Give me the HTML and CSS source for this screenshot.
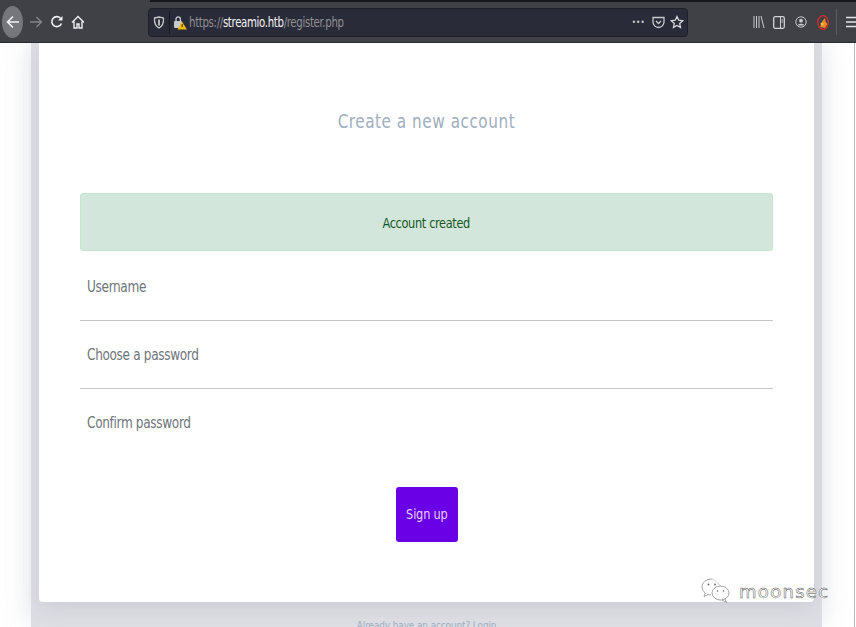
FILE: index.html
```html
<!DOCTYPE html>
<html lang="en">
<head>
<meta charset="utf-8">
<title>Create a new account</title>
<link rel="stylesheet" href="styles.css">
</head>
<body>
<div class="tabstrip"><div class="tabstrip-dark"></div></div>
<header class="toolbar">
  <div class="nav">
    <span class="back"><svg width="16" height="16" viewBox="0 0 16 16"><path d="M14 8H2.500M8 2.500 2.500 8 8 13.500" fill="none" stroke="#f4f4f6" stroke-width="1.600"/></svg></span>
    <svg class="fwd" width="14" height="14" viewBox="0 0 14 14"><path d="M1 7h11.500M7.500 2l5 5-5 5" fill="none" stroke="#85878c" stroke-width="1.300"/></svg>
    <svg class="reload" width="14" height="14" viewBox="0 0 14 14"><path d="M11.500 8.500A5 5 0 1 1 10.500 3.200" fill="none" stroke="#f0f0f3" stroke-width="1.600"/><path d="M12.500 1v4.600H8z" fill="#f0f0f3"/></svg>
    <svg class="home" width="14" height="14" viewBox="0 0 14 14"><path d="M1 7.500 7 1.500l6 6M3 6.500V13h3V9h2v4h3V6.500" fill="none" stroke="#f0f0f3" stroke-width="1.400"/></svg>
  </div>
  <div class="urlbar">
    <svg class="shield" width="12" height="13" viewBox="0 0 12 13"><path d="M1.500 2 6 1l4.500 1c.3 4.500-.8 8-4.500 10C2.300 10 1.200 6.500 1.500 2z" fill="none" stroke="#c4c5c9" stroke-width="1.300"/><path d="M6 3.500v6" stroke="#c4c5c9" stroke-width="1.800"/></svg>
    <span class="divider"></span>
    <svg class="lock" width="14" height="15" viewBox="0 0 14 15"><rect x="1" y="6" width="8" height="7" rx="1" fill="#c9cace"/><path d="M3 6V4a2.200 2.200 0 0 1 4.400 0v2" fill="none" stroke="#c9cace" stroke-width="1.300"/><path d="M9 6.500 14 14.500H4.500z" fill="#f5b800"/><path d="M9.200 9v3" stroke="#33261a" stroke-width="1"/></svg>
    <span class="url"><span class="sq sq-left"><span class="url-dim">https://</span><span class="url-host">streamio.htb</span><span class="url-dim">/register.php</span></span></span>
    <span class="dots">•••</span>
    <svg class="pocket" width="13" height="13" viewBox="0 0 13 13"><path d="M1 1.500h11V6a5.500 5.500 0 0 1-11 0z" fill="none" stroke="#c9cace" stroke-width="1.300"/><path d="m4 5 2.500 2.500L9 5" fill="none" stroke="#c9cace" stroke-width="1.300"/></svg>
    <svg class="star" width="14" height="14" viewBox="0 0 14 14"><path d="m7 1.500 1.700 3.700 4 .5-3 2.700.8 4L7 10.500l-3.500 1.900.8-4-3-2.700 4-.5z" fill="none" stroke="#d6d7da" stroke-width="1.300"/></svg>
  </div>
  <div class="tools">
    <svg class="t-lib" width="12" height="14" viewBox="0 0 12 14"><path d="M1 1v12M3.500 1v12M6 1v12M8 1l3 12" fill="none" stroke="#c9cace" stroke-width="1"/></svg>
    <svg class="t-side" width="12" height="13" viewBox="0 0 12 13"><rect x=".7" y=".7" width="10.600" height="11.600" rx="1.500" fill="none" stroke="#d2d3d6" stroke-width="1.300"/><path d="M7.500 1v11M8.500 4H10M8.500 6H10" stroke="#d2d3d6" fill="none"/></svg>
    <svg class="t-acct" width="12" height="12" viewBox="0 0 12 12"><circle cx="6" cy="6" r="5.200" fill="none" stroke="#c9cace" stroke-width="1"/><circle cx="6" cy="4.700" r="1.900" fill="#c9cace"/><path d="M2.500 9.500c1-2.200 6-2.200 7 0" fill="#c9cace"/></svg>
    <svg class="t-ext" width="12" height="15" viewBox="0 0 12 15"><ellipse cx="6" cy="7.500" rx="5.300" ry="6.800" fill="#3f4147" stroke="#d92b2b" stroke-width="1.300"/><path d="M3 12 5.500 6 8 3l.5 3.500L10.500 9 8 13z" fill="#ef8a1e"/><circle cx="5" cy="9" r="1.500" fill="#f6c04a"/></svg>
    <span class="sep"></span>
    <svg class="menu" width="12" height="12" viewBox="0 0 12 12"><path d="M0 1.500h12M0 6h12M0 10.500h12" stroke="#e4e4e7" stroke-width="1.500"/></svg>
  </div>
</header>
<main class="page">
  <div class="band">
    <section class="card">
      <h1 class="title"><span class="sq sq-title">Create a new account</span></h1>
      <div class="alert"><span class="sq">Account created</span></div>
      <form class="form">
        <div class="field"><span class="sq sq-left">Username</span></div>
        <div class="field"><span class="sq sq-left">Choose a password</span></div>
        <div class="field field-last"><span class="sq sq-left">Confirm password</span></div>
        <div class="actions"><button type="button" class="btn"><span class="sq">Sign up</span></button></div>
      </form>
    </section>
    <p class="foot"><span class="sq sq-foot">Already have an account? Login</span></p>
  </div>
  <div class="mark">
    <svg width="32" height="26" viewBox="0 0 32 26"><path d="M12 1C6 1 2 4.500 2 9c0 2.500 1.300 4.500 3.300 6L4 18.500 8 16.500c1 .3 2 .4 3 .4" fill="none" stroke="#8d8d8d" stroke-width=".8"/><path d="M21 8.500C18 5 15 2 12 1" fill="none" stroke="#c4c4c4" stroke-width=".8"/><circle cx="8.500" cy="6.500" r=".9" fill="#666"/><circle cx="15" cy="6.500" r=".9" fill="#666"/><ellipse cx="20.500" cy="15" rx="8.500" ry="7" fill="none" stroke="#8d8d8d" stroke-width=".8"/><path d="m25 21 1.500 3.500-4.500-2.500" fill="none" stroke="#8d8d8d" stroke-width=".8"/><circle cx="17.500" cy="13" r=".8" fill="#666"/><circle cx="23.500" cy="13" r=".8" fill="#666"/></svg>
    <span class="mark-text">moonsec</span>
  </div>
</main>
</body>
</html>
```
FILE: styles.css
```css
* { box-sizing: border-box; }
html, body { margin: 0; height: 627px; overflow: hidden; }
body {
  display: flex;
  flex-direction: column;
  background: #fff;
  font-family: "DejaVu Sans", "Noto Sans", sans-serif;
  font-stretch: condensed;
}
.sq { display: inline-block; white-space: nowrap; transform: scaleX(.87); }
.sq-left { transform-origin: left center; }
.sq-title { transform: scaleX(.85); }
.sq-foot { transform: scaleX(.9); }
.url .sq-left { transform: scaleX(.84); }
.tabstrip { height: 2px; background: #3f4147; flex: none; padding-left: 150px; position: relative; z-index: 2; }
.tabstrip-dark { height: 2px; background: #16171c; }
.toolbar {
  flex: none;
  height: 41px;
  background: #3f4147;
  border-bottom: 1px solid #2a2b30;
  display: flex;
  align-items: center;
  position: relative;
  z-index: 2;
}
.nav { display: flex; align-items: center; width: 148px; padding-left: 2px; flex: none; }
.back {
  width: 21px; height: 32px; border-radius: 50%;
  background: #75777c;
  display: flex; align-items: center; justify-content: center;
  flex: none;
}
.fwd { margin-left: 6px; }
.reload { margin-left: 7px; }
.home { margin-left: 7px; }
.urlbar {
  width: 540px; height: 29px; flex: none;
  background: #2a2b38;
  border: 1px solid #1f2027;
  border-radius: 4px;
  display: flex; align-items: center;
  padding: 0 3px 0 4px;
}
.divider { width: 1px; height: 23px; background: #17181d; margin-left: 4px; }
.lock { margin-left: 3px; }
.url {
  margin-left: 2px; font-size: 13.500px; white-space: nowrap;
  letter-spacing: -.4px;
  flex: 1;
}
.url-dim { color: #8f8f95; }
.url-host { color: #f4f4f6; }
.dots { color: #c9cace; font-size: 8px; letter-spacing: .2px; }
.pocket { margin-left: 7px; }
.star { margin-left: 5px; }
.tools { display: flex; align-items: center; flex: 1; padding-left: 65px; }
.t-side { margin-left: 8px; }
.t-acct { margin-left: 10px; }
.t-ext { margin-left: 10px; }
.sep { width: 1px; height: 26px; background: #5b5d63; margin-left: 7px; }
.menu { margin-left: 9px; flex: none; }
.page {
  flex: 1;
  min-height: 0;
  position: relative;
  background: #fff;
  padding: 0 34px 0 31px;
}
.page::after {
  content: "";
  position: absolute;
  right: 1px; top: 0; bottom: 0;
  width: 1px;
  background: #b9b9bd;
}
.band {
  height: 584px;
  background: #dedfe5;
  padding: 0 8px;
  box-shadow: 0 0 30px rgba(222, 223, 229, .7);
  text-align: center;
}
.card {
  height: 559px;
  background: #fff;
  border-radius: 0 0 4px 4px;
  padding: 64px 41px 0;
  box-shadow: 0 6px 22px rgba(150, 152, 165, .25);
  position: relative;
}
.title {
  margin: 0;
  font-size: 20px;
  font-weight: 400;
  line-height: 28px;
  color: #a0aec0;
  letter-spacing: .6px;
}
.alert {
  margin-top: 58px;
  height: 58px;
  border: 1px solid #c3e6cb;
  border-radius: 3px;
  background: #d2e6dc;
  color: #155724;
  font-size: 14.500px;
  letter-spacing: -.4px;
  line-height: 58px;
}
.form { display: block; }
.field {
  height: 70px;
  border-bottom: 1px solid #c6c6c8;
  text-align: left;
  padding: 26px 0 0 7px;
  font-size: 15.500px;
  line-height: 20px;
  letter-spacing: -.4px;
  color: #6f757c;
}
.field:nth-child(2) { height: 68px; padding-top: 24px; }
.field-last { border-bottom: 0; height: 68px; padding-top: 24px; }
.actions { display: flex; justify-content: center; margin-top: 30px; }
.btn {
  width: 62px; height: 55px;
  background: #6a00e6;
  color: #e3d0fb;
  border: 0;
  border-radius: 3px;
  padding: 0 0 2px;
  font: inherit;
  font-size: 14.500px;
  letter-spacing: -.2px;
}
.foot {
  margin: 0;
  padding-top: 16px;
  font-size: 11px;
  line-height: 16px;
  color: #a0aec0;
  letter-spacing: -.1px;
}
.mark {
  position: absolute;
  left: 700px;
  top: 535px;
  display: flex;
  align-items: center;
  gap: 7px;
}
.mark-text {
  font-family: "DejaVu Sans", sans-serif;
  font-stretch: normal;
  font-size: 18px;
  letter-spacing: 1.300px;
  color: #fff;
  -webkit-text-stroke: .5px #555;
}
```
